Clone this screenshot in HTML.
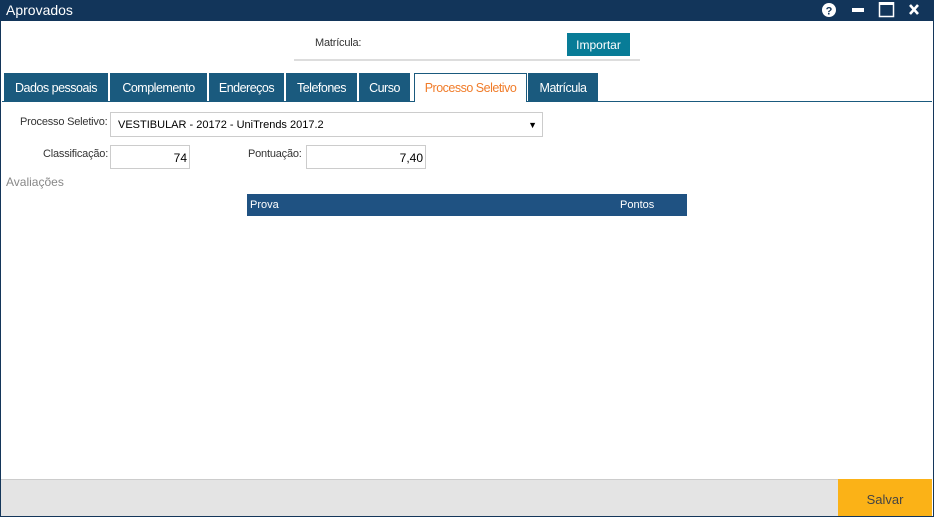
<!DOCTYPE html>
<html><head><meta charset="utf-8"><style>
*{margin:0;padding:0;box-sizing:border-box}
body{width:934px;height:517px;overflow:hidden;background:#fff;font-family:"Liberation Sans",sans-serif;position:relative}
.win{position:absolute;left:0;top:0;width:934px;height:517px;border:1px solid #14365a;border-top:none}
.title{position:absolute;left:0;top:0;width:934px;height:21px;background:#12355a;color:#fff;font-size:14px;line-height:21px;padding-left:6px}
.abs{position:absolute}
.tab{position:absolute;top:73px;height:28px;background:#1a5a7e;color:#fff;font-size:12.5px;line-height:31px;text-align:center;letter-spacing:-0.5px}
.tab.act{background:#fff;color:#f07c2a;border:1px solid #1a5a7e;border-bottom:none;line-height:29px}
.lbl{position:absolute;font-size:11px;color:#333;letter-spacing:-0.2px}
.inp{position:absolute;border:1px solid #ccc;background:#fff;font-size:12px}
</style></head><body>
<div class="win"></div>
<div class="title">Aprovados</div>
<svg class="abs" style="left:820px;top:2px" width="110" height="17">
<circle cx="9" cy="8" r="7" fill="#fff"/><text x="9" y="12.5" font-size="11" font-weight="bold" text-anchor="middle" fill="#12355a" font-family="Liberation Sans">?</text>
<rect x="32" y="6" width="12" height="4" fill="#fff"/>
<rect x="59.5" y="0.5" width="14" height="14" fill="none" stroke="#fff" stroke-width="1.5"/><rect x="59" y="0" width="15" height="3" fill="#fff"/>
<path d="M90 3 L98 12 M98 3 L90 12" stroke="#fff" stroke-width="2.6"/>
</svg>
<div class="lbl" style="left:315px;top:37px">Matrícula:</div>
<div class="abs" style="left:567px;top:33px;width:63px;height:23px;background:#087c97;color:#fff;font-size:12px;line-height:24px;text-align:center">Importar</div>
<div class="abs" style="left:294px;top:59px;width:346px;height:2px;background:#ddd"></div>
<div class="abs" style="left:2px;top:101px;width:930px;height:1px;background:#1a5a7e"></div>
<div class="tab" style="left:4px;width:104px">Dados pessoais</div>
<div class="tab" style="left:110px;width:97px">Complemento</div>
<div class="tab" style="left:209px;width:75px">Endereços</div>
<div class="tab" style="left:286px;width:71px">Telefones</div>
<div class="tab" style="left:359px;width:51px">Curso</div>
<div class="tab act" style="left:414px;width:113px;height:29px">Processo Seletivo</div>
<div class="tab" style="left:528px;width:70px">Matrícula</div>
<div class="lbl" style="left:20px;top:116px">Processo Seletivo:</div>
<div class="inp" style="left:110px;top:112px;width:433px;height:25px;padding-left:7px;line-height:24px;font-size:11px">VESTIBULAR - 20172 - UniTrends 2017.2<span style="position:absolute;right:5px;top:0;font-size:9px">▼</span></div>
<div class="lbl" style="left:43px;top:148px">Classificação:</div>
<div class="inp" style="left:110px;top:145px;width:80px;height:24px;text-align:right;padding-right:2px;line-height:24px">74</div>
<div class="lbl" style="left:248px;top:148px">Pontuação:</div>
<div class="inp" style="left:306px;top:145px;width:120px;height:24px;text-align:right;padding-right:2px;line-height:24px">7,40</div>
<div class="abs" style="left:6px;top:175px;font-size:12px;color:#888">Avaliações</div>
<div class="abs" style="left:247px;top:194px;width:440px;height:22px;background:#1f5282;color:#fff;font-size:11px;line-height:22px">
<span style="position:absolute;left:3px">Prova</span><span style="position:absolute;left:373px">Pontos</span></div>
<div class="abs" style="left:1px;top:479px;width:837px;height:37px;background:#e4e4e4;border-top:1px solid #ccc"></div>
<div class="abs" style="left:838px;top:479px;width:94px;height:37px;background:#fbb217;color:#444;font-size:13px;line-height:42px;text-align:center">Salvar</div>
<div class="abs" style="left:0;top:516px;width:934px;height:1px;background:#14365a"></div>
</body></html>
